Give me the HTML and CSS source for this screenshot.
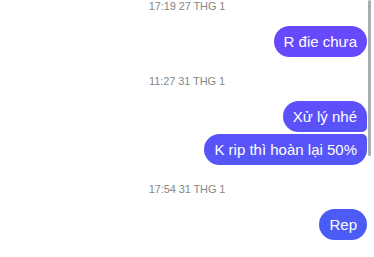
FILE: index.html
```html
<!DOCTYPE html>
<html>
<head>
    <title>Chat</title>
    <link rel="stylesheet" href="styles.css">
</head>
<body>
    <div class="thread">
        <div class="stamp">17:19 27 THG 1</div>
        <div class="group">
            <div class="bubble">R đie chưa</div>
        </div>

        <div class="stamp">11:27 31 THG 1</div>
        <div class="group">
            <div class="bubble first">Xử lý nhé</div>
            <div class="bubble last">K rip thì hoàn lại 50%</div>
        </div>

        <div class="stamp">17:54 31 THG 1</div>
        <div class="group">
            <div class="bubble">Rep</div>
        </div>

        <!-- scroll indicator -->
        <div class="scroll-thumb"></div>
    </div>
</body>
</html>
```

FILE: styles.css
```css
body {
    margin: 0;
    padding: 0;
    background-color: #ffffff;
    font-family: "Liberation Sans", Arial, sans-serif;
}

.thread {
    position: relative;
    display: flex;
    flex-direction: column;
    height: 257px;
    overflow: hidden;
    padding: 0 7px 0 0;
    box-sizing: border-box;
}

.stamp {
    text-align: center;
    font-size: 11px;
    line-height: 13px;
    letter-spacing: -0.1px;
    color: #868686;
    padding-left: 7px;
    margin: 18px 0 13px;
}

.stamp:first-child {
    margin-top: 0;
}

.group {
    display: flex;
    flex-direction: column;
    align-items: flex-end;
    gap: 2px;
}

/* message bubble, gradient pinned to the window */
.bubble {
    height: 31px;
    line-height: 31px;
    padding: 0 10px;
    border-radius: 16px;
    font-size: 15px;
    color: #ffffff;
    background: linear-gradient(to bottom, #6c45ff, #475ff3);
    background-attachment: fixed;
    white-space: nowrap;
}

.bubble.first {
    border-bottom-right-radius: 5px;
}

.bubble.last {
    border-top-right-radius: 5px;
}

.scroll-thumb {
    position: absolute;
    top: 0;
    right: 3px;
    width: 3px;
    height: 156px;
    border-radius: 2px;
    background-color: #acacac;
}
```
